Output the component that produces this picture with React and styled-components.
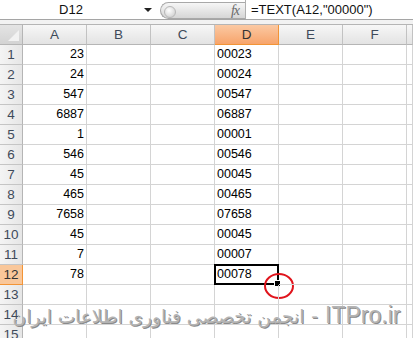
import React from 'react'
import styled, { createGlobalStyle } from 'styled-components'

const GlobalStyle = createGlobalStyle`
    body{
        margin: 0;
        background: #ffffff;
        overflow: hidden;
        font-family: "Liberation Sans", Arial, sans-serif;
    }
`

const colA = [23, 24, 547, 6887, 1, 546, 45, 465, 7658, 45, 7, 78]
const letters = ['A', 'B', 'C', 'D', 'E', 'F', '']

export default function App() {
    const rows = []
    for (let i = 1; i <= 15; i++) rows.push(i)

    return (
        <Page>
            <GlobalStyle/>
            <FormulaBar>
                <NameBox>D12</NameBox>
                <DropArrow/>
                <Splitter>
                    <Knob/>
                    <Fx>fx</Fx>
                </Splitter>
                <Formula>=TEXT(A12,"00000")</Formula>
            </FormulaBar>
            <Strip/>
            <Sheet>
                <Corner><Triangle/></Corner>
                {
                    letters.map((l, i) => (
                        <ColHead key={'h' + i} active={l === 'D'}>{l}</ColHead>
                    ))
                }
                {
                    rows.map(r => (
                        <React.Fragment key={r}>
                            <RowHead active={r === 12}>{r}</RowHead>
                            <Cell align="right">{colA[r - 1]}</Cell>
                            <Cell/>
                            <Cell/>
                            <Cell>
                                {colA[r - 1] !== undefined ? String(colA[r - 1]).padStart(5, '0') : ''}
                                {r === 12 && <Selection><Handle/><Ring/></Selection>}
                            </Cell>
                            <Cell/>
                            <Cell/>
                            <Cell/>
                        </React.Fragment>
                    ))
                }
            </Sheet>
            <Watermark>
                <Latin>ITPro.ir</Latin>
                <Dash>-</Dash>
                <Persian>انجمن تخصصی فناوری اطلاعات ایران</Persian>
            </Watermark>
        </Page>
    )
}

const Page = styled.div`
    position: relative;
    width: 413px;
    height: 338px;
    overflow: hidden;
`

const FormulaBar = styled.div`
    display: flex;
    align-items: stretch;
    height: 19px;
    border-bottom: 1px solid #a5a5a5;
    background: #ffffff;
`

const NameBox = styled.div`
    width: 142px;
    text-align: center;
    font-size: 13px;
    line-height: 20px;
    color: #111;
`

const DropArrow = styled.div`
    width: 0;
    height: 0;
    margin: 8px 8px 0 2px;
    border-left: 4px solid transparent;
    border-right: 4px solid transparent;
    border-top: 4px solid #222;
`

const Splitter = styled.div`
    position: relative;
    width: 84px;
    margin-top: 2px;
    border: 1px solid #a8a8a8;
    border-right: none;
    border-radius: 9px 0 0 9px;
    background: linear-gradient(#f6f6f6, #d6d6d6);
    display: flex;
    align-items: center;
    justify-content: flex-end;
`

const Knob = styled.div`
    position: absolute;
    left: 3px;
    top: 3px;
    width: 10px;
    height: 10px;
    border-radius: 50%;
    background: radial-gradient(circle at 40% 35%, #ffffff, #c8c8c8);
    border: 1px solid #b8b8b8;
`

const Fx = styled.span`
    font-family: "Liberation Serif", serif;
    font-style: italic;
    font-size: 14px;
    color: #6a6a6a;
    margin-right: 6px;
    letter-spacing: -1px;
`

const Formula = styled.div`
    flex: 1;
    border-left: 1px solid #b0b0b0;
    padding-left: 5px;
    font-size: 13px;
    line-height: 20px;
    color: #111;
    white-space: nowrap;
`

const Strip = styled.div`
    height: 4px;
    background: #f2f2f2;
    border-bottom: 1px solid #b5b5b5;
`

const Sheet = styled.div`
    display: grid;
    grid-template-columns: 23px repeat(6, 64px) 1fr;
    grid-auto-rows: 20px;
`

const Corner = styled.div`
    position: relative;
    box-sizing: border-box;
    background: linear-gradient(#e4e4e4, #d3d3d3);
    border-right: 1px solid #b5b5b5;
    border-bottom: 1px solid #b5b5b5;
`

const Triangle = styled.div`
    position: absolute;
    right: 3px;
    bottom: 3px;
    width: 0;
    height: 0;
    border-left: 11px solid transparent;
    border-bottom: 11px solid #f2f2f2;
`

const ColHead = styled.div`
    box-sizing: border-box;
    display: flex;
    align-items: center;
    justify-content: center;
    font-size: 13.5px;
    color: ${p => p.active ? '#333' : '#3e4a5a'};
    background: ${p => p.active ? 'linear-gradient(#fbc9a3, #f7a46b)' : 'linear-gradient(#f7f7f7, #e3e3e3)'};
    border-right: 1px solid ${p => p.active ? '#f29436' : '#c2c2c2'};
    border-bottom: 1px solid ${p => p.active ? '#f29436' : '#b5b5b5'};
`

const RowHead = styled.div`
    box-sizing: border-box;
    display: flex;
    align-items: center;
    justify-content: center;
    font-size: 13.5px;
    color: ${p => p.active ? '#333' : '#3e4a5a'};
    background: ${p => p.active ? '#f9c79a' : 'linear-gradient(90deg, #f4f4f4, #e6e6e6)'};
    border-right: 1px solid ${p => p.active ? '#f29436' : '#b5b5b5'};
    border-bottom: 1px solid ${p => p.active ? '#f29436' : '#c5c5c5'};
`

const Cell = styled.div`
    position: relative;
    box-sizing: border-box;
    display: flex;
    align-items: flex-end;
    justify-content: ${p => p.align === 'right' ? 'flex-end' : 'flex-start'};
    padding: 0 2px 3px 2px;
    font-size: 12.5px;
    line-height: 13px;
    color: #000;
    border-right: 1px solid #d4d4d4;
    border-bottom: 1px solid #d4d4d4;
`

const Selection = styled.div`
    position: absolute;
    left: -1px;
    top: -1px;
    right: -1px;
    bottom: -1px;
    border: 2px solid #000;
    pointer-events: none;
`

const Handle = styled.div`
    position: absolute;
    right: -4px;
    bottom: -4px;
    width: 5px;
    height: 5px;
    background: #000;
    border: 1px solid #fff;
`

const Ring = styled.div`
    position: absolute;
    right: -17px;
    bottom: -16px;
    width: 26px;
    height: 22px;
    border: 2px solid #e0141c;
    border-radius: 50%;
`

const Watermark = styled.div`
    position: absolute;
    left: 0;
    right: 0;
    top: 302px;
    display: flex;
    flex-direction: row-reverse;
    justify-content: center;
    align-items: baseline;
    gap: 7px;
    white-space: nowrap;
    color: #b4b4b4;
    text-shadow: 1px 1px 0 #8a8a8a;
    pointer-events: none;
`

const Latin = styled.span`
    font-family: "Liberation Sans", sans-serif;
    font-size: 23px;
`

const Dash = styled.span`
    font-family: "Liberation Sans", sans-serif;
    font-size: 20px;
`

const Persian = styled.span`
    direction: rtl;
    font-family: "DejaVu Sans", sans-serif;
    font-size: 18.5px;
`
